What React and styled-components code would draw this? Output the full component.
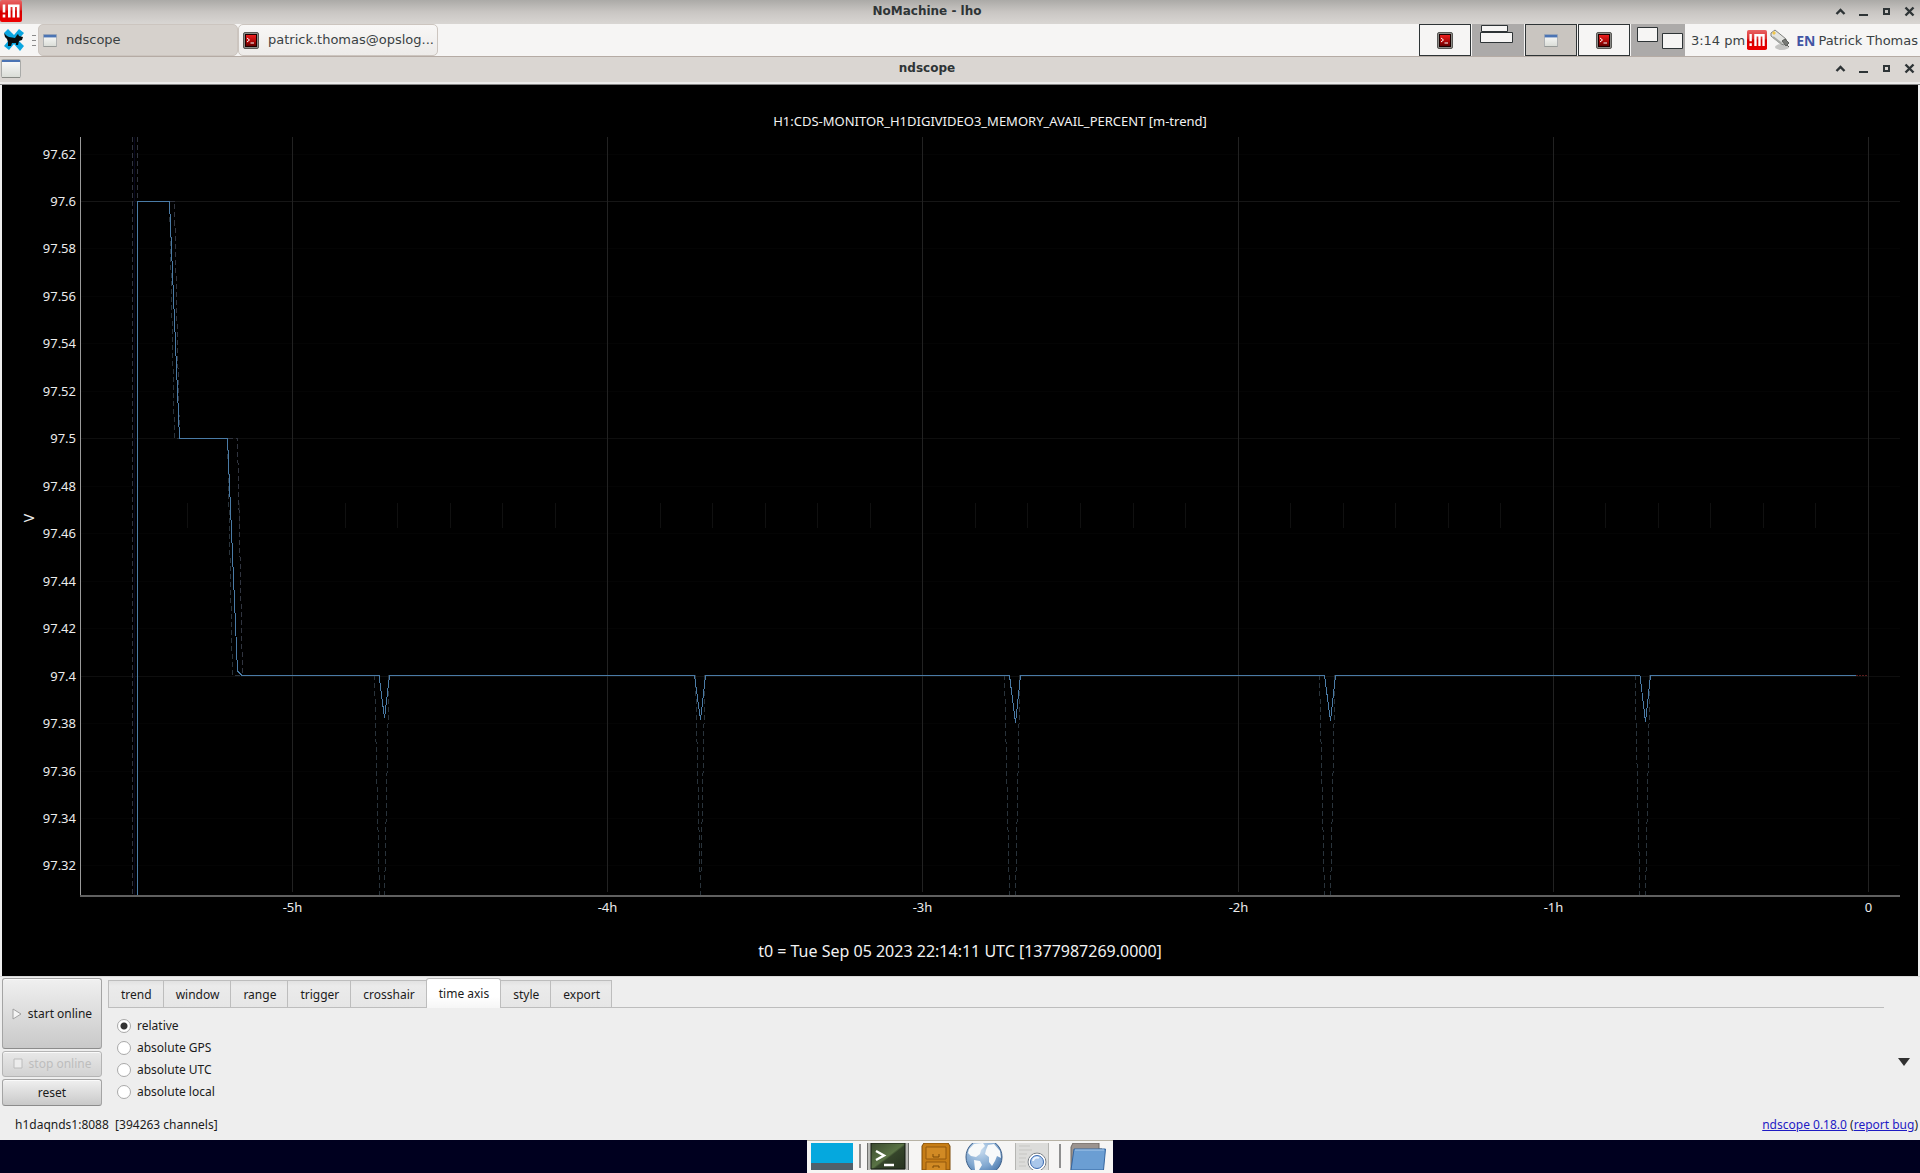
import React, { useState } from "react";
import styled, { createGlobalStyle, css } from "styled-components";

const UI = '"DejaVu Sans", sans-serif';
const NOTO = '"Noto Sans", sans-serif';

const GlobalStyle = createGlobalStyle`
  * { box-sizing: border-box; }
  body { margin: 0; background: #00001f; }
  button, input { font: inherit; color: inherit; }
`;

const Desktop = styled.div`
  display: flex;
  flex-direction: column;
  min-height: 100vh;
  font-family: ${UI};
  font-size: 13px;
  color: #3a4143;
`;

/* ---------- window title bars ---------- */

const TitleBar = styled.header`
  display: grid;
  grid-template-columns: 24px 1fr 90px;
  align-items: center;
  height: ${(p) => (p.$outer ? "24px" : "29px")};
  ${(p) =>
    p.$outer
      ? css`
          background: linear-gradient(#abaaa7, #c9c6c3 50%, #d9d6d3);
          padding-bottom: 3px;
        `
      : css`
          background: #dad6d2;
          border-top: 1px solid #b5aba4;
          border-bottom: 1px solid #858585;
          box-shadow: inset 0 -2px #ecebea;
          padding-bottom: 5px;
        `}
`;

const TitleText = styled.h1`
  margin: 0;
  font-size: 12px;
  line-height: 20px;
  font-weight: 700;
  color: #2e3436;
  text-align: center;
`;

const WindowButtons = styled.div`
  display: flex;
  justify-content: flex-end;
  gap: 7px;
  padding-right: 3px;
`;

const WindowButton = styled.button`
  display: flex;
  width: 16px;
  height: 16px;
  padding: 0;
  border: 0;
  background: none;
`;

const MenuButton = styled.button`
  display: flex;
  padding: 0;
  border: 0;
  background: none;
  margin-left: ${(p) => (p.$inset ? "1px" : "0")};
`;

/* ---------- desktop panel ---------- */

const Panel = styled.nav`
  display: flex;
  align-items: center;
  height: 32px;
  background: #f6f5f4;
  white-space: nowrap;
`;

const PanelButton = styled.button`
  display: flex;
  padding: 0;
  border: 0;
  background: none;
  margin: 0 7px 0 3px;
`;

const Handle = styled.div`
  width: 4px;
  height: 11px;
  margin-right: 2px;
  border-top: 1px solid #8b8b8b;
  border-bottom: 1px solid #8b8b8b;
  background: linear-gradient(#8b8b8b, #8b8b8b) center / 4px 1px no-repeat;
`;

const TaskButton = styled.button`
  display: flex;
  align-items: center;
  gap: 9px;
  width: 200px;
  height: 32px;
  padding: 0 0 0 4px;
  border: 1px solid #ccc5bf;
  border-radius: 5px;
  background: ${(p) => (p.$active ? "#d6d1cc" : "linear-gradient(#f8f7f6, #edebe9)")};
  line-height: 20px;
  text-align: left;
`;

const Spring = styled.div`
  flex: 1;
`;

const Pager = styled.div`
  display: flex;
  gap: 1px;
  height: 32px;
  margin-right: 6px;
`;

const Workspace = styled.button`
  display: flex;
  align-items: center;
  justify-content: center;
  width: ${(p) => (p.$last ? "54px" : "52px")};
  padding: 0;
  border: ${(p) => (p.$busy ? "0" : "1px solid #2e3436")};
  background: ${(p) => (p.$busy ? "#acaaa9" : p.$current ? "#c9c5c0" : "#f6f5f4")};
`;

const Tray = styled.div`
  display: flex;
  align-items: center;
  gap: 3px;
  margin: 0 6px 0 2px;
`;

const Layout = styled.span`
  margin-right: 3px;
  font-family: ${NOTO};
  font-size: 14px;
  font-weight: 700;
  color: #4255a4;
`;

const User = styled.span`
  padding-right: 2px;
`;

/* ---------- plot ---------- */

const Window = styled.main`
  display: flex;
  flex-direction: column;
  flex: 1;
  font-family: ${NOTO};
  font-size: 12px;
  line-height: 18px;
  color: #1b1b1b;
  background: #eeeeee;
`;

const Plot = styled.figure`
  margin: 0 2px;
  background: #000;
  color: #f2f2f2;
`;

const PlotTitle = styled.h2`
  margin: 0;
  padding: 26px 18px 6px 78px;
  font-size: 13px;
  line-height: 20px;
  font-weight: 400;
  text-align: center;
`;

const Chart = styled.svg`
  display: block;
  width: 100%;
  height: auto;
  font-family: ${NOTO};
  font-size: 13px;
`;

const PlotCaption = styled.figcaption`
  padding: 16px 0 15px;
  font-size: 16px;
  line-height: 20px;
  text-align: center;
`;

/* ---------- controls ---------- */

const Controls = styled.section`
  display: flex;
  padding: 1px 2px 0;
  border-top: 1px solid #d8d8d8;
`;

const Actions = styled.div`
  display: flex;
  flex-direction: column;
  gap: 2px;
  width: 100px;
  margin-right: 6px;
`;

const ActionButton = styled.button`
  display: flex;
  align-items: center;
  justify-content: center;
  gap: 4px;
  height: ${(p) => (p.$tall ? "71px" : "27px")};
  padding: 0;
  border: 1px solid #a4a4a4;
  border-bottom-color: #8c8c8c;
  border-radius: 3px;
  background: linear-gradient(#f0f0f0, #c9c9c9);
  box-shadow: inset 0 1px #fafafa;
  white-space: nowrap;
  &:disabled {
    height: 26px;
    color: #bdbdbd;
    border-color: #b4b4b4;
    background: linear-gradient(#e8e8e8, #d2d2d2);
  }
`;

const TabArea = styled.div`
  flex: 1;
`;

const TabList = styled.div`
  display: flex;
  align-items: flex-end;
  height: 30px;
  border-bottom: 1px solid #bdbdbd;
`;

const Tab = styled.button`
  height: 27px;
  padding: 2px 11px 0 12px;
  border: 1px solid #bdbdbd;
  border-bottom: 0;
  margin-left: -1px;
  background: linear-gradient(#e2e2e2, #ebebeb 20%, #e6e6e6);
  &:first-child {
    margin-left: 0;
  }
  ${(p) =>
    p.$active &&
    css`
      height: 30px;
      margin-bottom: -1px;
      padding-bottom: 2px;
      border-radius: 3px 3px 0 0;
      background: linear-gradient(#fff 60%, #f6f6f6);
    `}
`;

const RadioGroup = styled.fieldset`
  display: flex;
  flex-direction: column;
  align-items: flex-start;
  margin: 0;
  padding: 7px 0 0 9px;
  border: 0;
`;

const RadioRow = styled.label`
  display: flex;
  align-items: center;
  gap: 6px;
  height: 22px;
`;

const Radio = styled.input`
  appearance: none;
  width: 14px;
  height: 14px;
  margin: 0;
  border: 1px solid #a9a9a9;
  border-radius: 50%;
  background: #fff;
  &:checked {
    background: radial-gradient(circle, #333 3px, #fff 4px);
  }
`;

const Collapse = styled.button`
  align-self: center;
  display: flex;
  justify-content: center;
  width: 28px;
  margin: 40px 0 0 6px;
  padding: 0;
  border: 0;
  background: none;
`;

const StatusBar = styled.footer`
  display: flex;
  justify-content: space-between;
  padding: 10px 2px 6px 15px;
  white-space: pre;
`;

const Link = styled.a`
  color: #1f1bc4;
`;

/* ---------- dock ---------- */

const DockArea = styled.nav`
  display: flex;
  justify-content: center;
  height: 33px;
  background: #00001f;
`;

const Dock = styled.div`
  display: flex;
  align-items: center;
  gap: 6px;
  padding: 0 4px 2px;
  background: #f6f5f4;
  border-top: 1px solid #b7b2a4;
`;

const DockButton = styled.button`
  display: flex;
  padding: 0;
  border: 0;
  background: none;
`;

const DockRule = styled.div`
  width: 2px;
  height: 24px;
  background: #8f8f8f;
`;

/* ---------- icons ---------- */

const NoMachineIcon = ({ size = 22 }) => (
  <svg width={size} height={size} viewBox="0 0 22 22">
    <defs>
      <linearGradient id="nm" x1="0" y1="0" x2="0" y2="1">
        <stop offset="0" stopColor="#e86464" />
        <stop offset=".45" stopColor="#dc2a2a" />
        <stop offset=".5" stopColor="#d30000" />
        <stop offset="1" stopColor="#e00" />
      </linearGradient>
    </defs>
    <rect width="22" height="22" rx="2" fill="url(#nm)" />
    <path d="M4 4.500v8M4 14.500v3" stroke="#fff" strokeWidth="2.600" fill="none" />
    <path d="M9.300 17.500V5.800H18.200V17.500M13.750 5.800V17.500" stroke="#fff" strokeWidth="2.600" fill="none" />
  </svg>
);

const XfceIcon = () => (
  <svg width="22" height="24" viewBox="0 0 22 24">
    <path d="M1 5l4-4 6 6 5-6 5 4-6 7 6 6-4 5-6-7-5 6-5-4 5-6z" fill="#0ba6e0" />
    <path
      d="M1 5l3 3 2 1 6 1 2-3 1-1 1 2 4 1-1 3-3 1-1 4h-2v-2H9l-1 3H5v-4l-1-3-2-2z"
      fill="#0a0d0e"
    />
  </svg>
);

const WindowIcon = ({ small }) => (
  <svg width={small ? 14 : 20} height={small ? 13 : 19} viewBox="0 0 20 19" preserveAspectRatio="none">
    <defs>
      <linearGradient id="wi" x1="0" y1="0" x2="0" y2="1">
        <stop offset="0" stopColor="#fdfdfd" />
        <stop offset="1" stopColor="#d9dcd6" />
      </linearGradient>
    </defs>
    <rect x=".5" y=".5" width="19" height="18" rx="1" fill="url(#wi)" stroke={small ? "#8f9498" : "#a9aaa8"} />
    <rect x="1" y="1" width="18" height={small ? 4 : 2} fill="#4b74b4" />
    <path d="M1 18.500H19" stroke="#888a85" />
  </svg>
);

const TerminalIcon = () => (
  <svg width="16" height="17" viewBox="0 0 16 17">
    <defs>
      <linearGradient id="ti" x1="0" y1="0" x2="0" y2="1">
        <stop offset="0" stopColor="#f21f1f" />
        <stop offset=".6" stopColor="#a80606" />
        <stop offset="1" stopColor="#5b0000" />
      </linearGradient>
    </defs>
    <rect x=".5" y=".5" width="15" height="16" rx="1.500" fill="#8c8c88" stroke="#595956" />
    <rect x="2.500" y="2.500" width="11" height="12" fill="url(#ti)" stroke="#1c0000" />
    <path d="M4 6l2.500 2L4 10M7.500 11H11" stroke="#fff" fill="none" />
  </svg>
);

const PlugIcon = () => (
  <svg width="20" height="22" viewBox="0 0 20 22">
    <ellipse cx="12" cy="18" rx="7" ry="3" fill="#c4c4c2" />
    <path d="M1 4l4-3 11 9 1 3-3 3-3-1L1 7z" fill="#e3e4e1" stroke="#80827e" />
    <path d="M2 4l2-2 2 2-2 2z" fill="#f0c64a" />
    <path d="M3 8l9 7" stroke="#a5a7a3" strokeWidth="2" />
    <path d="M12 12l3-2 4 4-3 3zM17 16l2 2" fill="#777975" stroke="#5c5e5b" />
  </svg>
);

const ICON_STROKE = { stroke: "#2e3436", fill: "none" };

const ShadeGlyph = () => (
  <svg width="16" height="16" viewBox="0 0 16 16">
    <path d="M4.500 11L8.500 7l4 4" {...ICON_STROKE} strokeWidth="2.400" />
  </svg>
);
const MinimizeGlyph = () => (
  <svg width="16" height="16" viewBox="0 0 16 16">
    <path d="M4 12H13" {...ICON_STROKE} strokeWidth="2" />
  </svg>
);
const MaximizeGlyph = () => (
  <svg width="16" height="16" viewBox="0 0 16 16">
    <path d="M6 6h5v5H6z" {...ICON_STROKE} strokeWidth="2" />
  </svg>
);
const CloseGlyph = () => (
  <svg width="16" height="16" viewBox="0 0 16 16">
    <path d="M4.500 4.500l8 8M12.500 4.500l-8 8" {...ICON_STROKE} strokeWidth="2.400" />
  </svg>
);

const StackedWindows = () => (
  <svg width="52" height="32" viewBox="0 0 52 32">
    <g fill="#f6f5f4" stroke="#2e3436">
      <path d="M9.500 1.500h26v6h-26zM8.500 8.500h32v10h-32z" />
    </g>
  </svg>
);
const SideWindows = () => (
  <svg width="54" height="32" viewBox="0 0 54 32">
    <g fill="#f6f5f4" stroke="#2e3436">
      <path d="M6.500 3.500h20v14h-20zM31.500 9.500h20v15h-20z" />
    </g>
  </svg>
);

const ShowDesktopIcon = () => (
  <svg width="42" height="27" viewBox="0 0 42 27">
    <rect width="42" height="20" fill="#05a8de" />
    <rect y="20" width="42" height="7" fill="#50606b" />
  </svg>
);
const DockTerminalIcon = () => (
  <svg width="42" height="27" viewBox="0 0 42 27">
    <defs>
      <linearGradient id="dt" x1="0" y1="0" x2="1" y2="1">
        <stop offset="0" stopColor="#3b4a30" />
        <stop offset=".5" stopColor="#5a7345" />
        <stop offset=".55" stopColor="#35452a" />
        <stop offset="1" stopColor="#263220" />
      </linearGradient>
    </defs>
    <path d="M0 0H42V27H0z" fill="#b9bab6" />
    <path d="M.5 0V27M41.500 0V27" stroke="#70716e" />
    <path d="M4 0H38V26H4z" fill="url(#dt)" stroke="#151b12" />
    <path d="M9 8l8 4.500L9 17M17 22H27" stroke="#fff" strokeWidth="2.400" fill="none" />
  </svg>
);
const CabinetIcon = () => (
  <svg width="42" height="27" viewBox="0 0 42 27">
    <path d="M7 27V3l2-3h24l2 3v24z" fill="#c67d16" stroke="#7d4b06" />
    <path d="M11 4h20v12H11zM11 19h20v9H11z" fill="#d18a24" stroke="#93590c" />
    <path d="M18 11v3h6v-3M18 25v-2h6v2" stroke="#7d4b06" fill="none" />
  </svg>
);
const GlobeIcon = () => (
  <svg width="42" height="27" viewBox="0 0 42 27">
    <defs>
      <radialGradient id="gl" cx=".4" cy=".3" r=".8">
        <stop offset="0" stopColor="#c9ddf0" />
        <stop offset=".6" stopColor="#7fa6cf" />
        <stop offset="1" stopColor="#3f6ea5" />
      </radialGradient>
    </defs>
    <circle cx="21" cy="14" r="18" fill="url(#gl)" stroke="#3d5f88" />
    <path
      d="M6 6l5-5 9-1 2 3-4 4-1 4-4 3-5-1-3-3zM25 2l6-1 6 7 1 7-4-2-2 5-3 5-3-4v-5l-4-3 1-4zM11 17l6 1 2 4-3 5h-4z"
      fill="#f7f9fa"
    />
  </svg>
);
const SearchIcon = () => (
  <svg width="42" height="27" viewBox="0 0 42 27">
    <path d="M5 0H37V27H5z" fill="#dcdcda" />
    <path d="M4.500 0V27M37.500 0V27" stroke="#b5b5b2" />
    <path d="M8 3h11M8 7h13M8 11h8M8 15h7M8 19h6M8 23h7" stroke="#c6c6c3" />
    <circle cx="26" cy="19" r="8" fill="#a9c6ea" stroke="#fff" strokeWidth="3" />
    <circle cx="26" cy="19" r="9" fill="none" stroke="#747a80" />
    <circle cx="26" cy="19" r="6.500" fill="#a9c6ea" stroke="#3d6bb0" />
    <path d="M22 18a4 4 0 0 1 6-3" stroke="#eef5fd" strokeWidth="2" fill="none" />
  </svg>
);
const FolderIcon = () => (
  <svg width="42" height="27" viewBox="0 0 42 27">
    <path d="M4 27V4l2-4h26v6h3v21z" fill="#9b938f" stroke="#6f6965" />
    <path d="M7 6H38.500l-2 21H4z" fill="#6b9ed3" stroke="#3566a0" />
    <path d="M8 7H37" stroke="#a8c8ea" />
  </svg>
);

/* ---------- chart ---------- */

const RIGHT = 1898;
const LEFT = 79;
const BASE = 759;
const timeX = (hours) => Math.round(1866 + hours * 315.2) + 0.5;
const valueY = (v) => Math.round(64 + (97.6 - v) * 2373) + 0.5;

const HOURS = [-5, -4, -3, -2, -1, 0];
const VALUES = Array.from({ length: 16 }, (_, i) => Number((97.62 - i * 0.02).toFixed(2)));
const MAJOR_VALUES = [97.6, 97.5, 97.4];
const TEN_MINUTES = Array.from({ length: 33 }, (_, i) => -i / 6).filter((_, i) => i % 6 !== 0);

/* start of dip, lowest point x, lowest point y, end of dip, minimum trace start */
const DIPS = [
  [377, 382.5, 581, 387.5, 372.5],
  [692.5, 698.5, 583, 703.5, 693.5],
  [1007.5, 1013.5, 586, 1018.5, 1002.5],
  [1322.5, 1328.5, 584, 1333.5, 1317.5],
  [1638, 1643.5, 585, 1648.5, 1633],
];

const MEAN =
  `M135.500 ${BASE}V64.500H167.500L177.500 301.500H225.500L235.500 534L240 538.500` +
  DIPS.map(([a, m, y, b]) => `H${a}L${m} ${y}L${b} 538.500`).join("") +
  "H1854";

const MINIMUM =
  "M167.500 64.500L172.500 301.500H177.500M225.500 301.500L230.500 538.500H240" +
  DIPS.map(([, m, , b, s]) => `M${s} 538.500L${s + 5} ${BASE}M${m} ${BASE}L${b - 0.5} 538.500`).join("");

const MAXIMUM =
  `M130.500 0V${BASE}M135.500 0V64M167.500 64.500H172.500L177.500 301.500M225.500 301.500H235.500L240.500 538.500`;

const TrendChart = () => (
  <Chart viewBox="0 0 1916 788" role="img" aria-label="Memory available, percent, last five and a half hours">
    <g shapeRendering="crispEdges" fill="none">
      {VALUES.map((v) => (
        <path key={v} d={`M${LEFT} ${valueY(v)}H${RIGHT}`} stroke="#040404" />
      ))}
      {MAJOR_VALUES.map((v) => (
        <path key={v} d={`M${LEFT} ${valueY(v)}H${RIGHT}`} stroke={v === 97.6 ? "#161616" : "#0e0e0e"} />
      ))}
      {TEN_MINUTES.map((h) => (
        <path key={h} d={`M${timeX(h)} 366V391`} stroke="#101010" />
      ))}
      {HOURS.map((h) => (
        <path key={h} d={`M${timeX(h)} 0V755`} stroke="#222222" />
      ))}
      <path d={MAXIMUM} stroke="#30343f" strokeDasharray="5 3" />
      <path d={MINIMUM} stroke="#29333b" strokeDasharray="5 3" />
      <path d="M132.500 0V759" stroke="#06061c" />
      <path d={MEAN} stroke="#4a7ba6" />
      <path d="M1854 538.500H1866" stroke="#5a1c1c" strokeDasharray="2 1" />
      <path d={`M78.500 0V${BASE}`} stroke="#9a9a9a" />
      <path d={`M78 ${BASE}H${RIGHT}`} stroke="#606060" strokeWidth="2" />
    </g>
    <g fill="#ececec">
      {VALUES.map((v) => (
        <text key={v} x="74" y={valueY(v) + 4} textAnchor="end">
          {v}
        </text>
      ))}
      {HOURS.map((h) => (
        <text key={h} x={timeX(h)} y="775" textAnchor="middle">
          {h === 0 ? "0" : `${h}h`}
        </text>
      ))}
      <text transform="translate(32 381) rotate(-90)" textAnchor="middle" fontSize="14">
        V
      </text>
    </g>
  </Chart>
);

/* ---------- page ---------- */

const GlyphRow = () => (
  <WindowButtons>
    <WindowButton aria-label="Shade"><ShadeGlyph /></WindowButton>
    <WindowButton aria-label="Minimize"><MinimizeGlyph /></WindowButton>
    <WindowButton aria-label="Maximize"><MaximizeGlyph /></WindowButton>
    <WindowButton aria-label="Close"><CloseGlyph /></WindowButton>
  </WindowButtons>
);

const TABS = ["trend", "window", "range", "trigger", "crosshair", "time axis", "style", "export"];
const AXIS_MODES = ["relative", "absolute GPS", "absolute UTC", "absolute local"];

export default function App() {
  const [tab, setTab] = useState("time axis");
  const [mode, setMode] = useState("relative");

  return (
    <Desktop>
      <GlobalStyle />
      <TitleBar $outer>
        <MenuButton aria-label="Window menu"><NoMachineIcon /></MenuButton>
        <TitleText>NoMachine - lho</TitleText>
        <GlyphRow />
      </TitleBar>

      <Panel>
        <PanelButton aria-label="Applications"><XfceIcon /></PanelButton>
        <Handle />
        <TaskButton $active>
          <WindowIcon small />
          ndscope
        </TaskButton>
        <TaskButton>
          <TerminalIcon />
          patrick.thomas@opslog...
        </TaskButton>
        <Spring />
        <Pager>
          <Workspace aria-label="Workspace 1"><TerminalIcon /></Workspace>
          <Workspace $busy aria-label="Workspace 2"><StackedWindows /></Workspace>
          <Workspace $current aria-label="Workspace 3"><WindowIcon small /></Workspace>
          <Workspace aria-label="Workspace 4"><TerminalIcon /></Workspace>
          <Workspace $busy $last aria-label="Workspace 5"><SideWindows /></Workspace>
        </Pager>
        <time>3:14 pm</time>
        <Tray>
          <NoMachineIcon size={20} />
          <PlugIcon />
        </Tray>
        <Layout>EN</Layout>
        <User>Patrick Thomas</User>
      </Panel>

      <TitleBar>
        <MenuButton $inset aria-label="Window menu"><WindowIcon /></MenuButton>
        <TitleText as="h2">ndscope</TitleText>
        <GlyphRow />
      </TitleBar>

      <Window>
        <Plot>
          <PlotTitle>H1:CDS-MONITOR_H1DIGIVIDEO3_MEMORY_AVAIL_PERCENT [m-trend]</PlotTitle>
          <TrendChart />
          <PlotCaption>t0 = Tue Sep 05 2023 22:14:11 UTC [1377987269.0000]</PlotCaption>
        </Plot>

        <Controls>
          <Actions>
            <ActionButton $tall>
              <svg width="12" height="14" viewBox="0 0 12 14">
                <path d="M1 2v10l8-5z" fill="#f4f4f4" stroke="#a0a0a0" />
              </svg>
              start online
            </ActionButton>
            <ActionButton disabled>
              <svg width="12" height="12" viewBox="0 0 12 12">
                <path d="M1 1h8v9H1z" fill="#ececec" stroke="#bcbcbc" />
              </svg>
              stop online
            </ActionButton>
            <ActionButton>reset</ActionButton>
          </Actions>
          <TabArea>
            <TabList role="tablist">
              {TABS.map((name) => (
                <Tab
                  key={name}
                  role="tab"
                  aria-selected={name === tab}
                  $active={name === tab}
                  onClick={() => setTab(name)}
                >
                  {name}
                </Tab>
              ))}
            </TabList>
            <RadioGroup aria-label="Time axis mode">
              {AXIS_MODES.map((name) => (
                <RadioRow key={name}>
                  <Radio type="radio" name="axis" checked={name === mode} onChange={() => setMode(name)} />
                  {name}
                </RadioRow>
              ))}
            </RadioGroup>
          </TabArea>
          <Collapse aria-label="Collapse controls">
            <svg width="12" height="8" viewBox="0 0 12 8">
              <path d="M0 0H12L6 8z" fill="#303030" />
            </svg>
          </Collapse>
        </Controls>

        <StatusBar>
          <span>h1daqnds1:8088  [394263 channels]</span>
          <span>
            <Link href="#ndscope">ndscope 0.18.0</Link> (<Link href="#bug">report bug</Link>)
          </span>
        </StatusBar>
      </Window>

      <DockArea>
        <Dock>
          <DockButton aria-label="Show desktop"><ShowDesktopIcon /></DockButton>
          <DockRule />
          <DockButton aria-label="Terminal"><DockTerminalIcon /></DockButton>
          <DockButton aria-label="File manager"><CabinetIcon /></DockButton>
          <DockButton aria-label="Web browser"><GlobeIcon /></DockButton>
          <DockButton aria-label="Application finder"><SearchIcon /></DockButton>
          <DockRule />
          <DockButton aria-label="Home folder"><FolderIcon /></DockButton>
        </Dock>
      </DockArea>
    </Desktop>
  );
}
